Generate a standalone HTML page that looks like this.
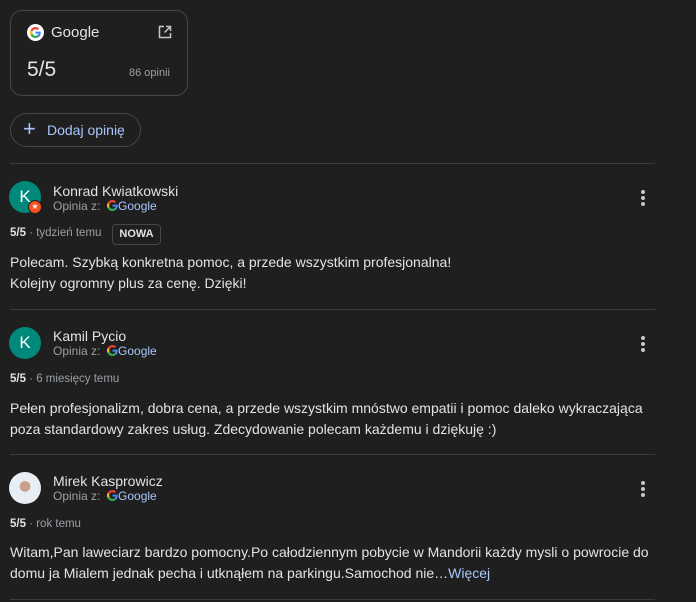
<!DOCTYPE html><html><head><style>
body{margin:0;background:#1f1f1f;font-family:"Liberation Sans",sans-serif;color:#e3e3e3;width:696px;height:602px;overflow:hidden;position:relative}
.a{position:absolute}
.card{left:10px;top:10px;width:178px;height:86px;border:1px solid #444746;border-radius:12px;box-sizing:border-box}
.btn{left:10px;top:113px;width:131px;height:34px;border:1px solid #444746;border-radius:17px;box-sizing:border-box;color:#a8c7fa;font-size:14px}
.hr{left:10px;width:645px;height:1px;background:#3c3c3c}
.av{left:9px;width:32px;height:32px;border-radius:50%;background:#00897b;color:#fff;font-size:17px;text-align:center;line-height:32px}
.nm{left:53px;font-size:14px;color:#e3e3e3}
.op{left:53px;font-size:12px;color:#9aa0a6}
.op b{font-weight:normal;color:#a8c7fa}
.rt{left:10px;font-size:11.5px;color:#9aa0a6}
.rt b{color:#e3e3e3}
.tx{left:10px;font-size:14px;line-height:21px;color:#e3e3e3;width:640px}
.dots{left:641px;width:4px}
.dots i{display:block;width:4px;height:4px;border-radius:2px;background:#c4c7c5;margin-bottom:2px}
</style></head><body>
<svg width="0" height="0" style="position:absolute"><defs><g id="g"><path d="M23.5 12.3c0-.8-.1-1.6-.2-2.3H12v4.4h6.5a5.5 5.5 0 0 1-2.4 3.6v3h3.9c2.2-2.1 3.5-5.1 3.5-8.7z" fill="#4285f4"/><path d="M12 24c3.2 0 6-1.1 8-2.9l-3.9-3a7.2 7.2 0 0 1-10.8-3.8h-4v3.1A12 12 0 0 0 12 24z" fill="#34a853"/><path d="M5.3 14.3a7.2 7.2 0 0 1 0-4.6V6.6h-4a12 12 0 0 0 0 10.8z" fill="#fbbc05"/><path d="M12 4.8c1.8 0 3.3.6 4.6 1.8l3.4-3.4A12 12 0 0 0 1.3 6.6l4 3.1A7.2 7.2 0 0 1 12 4.8z" fill="#ea4335"/></g></defs></svg>
<div class="a card">
<div class="a" style="left:16px;top:13px;width:17px;height:17px;border-radius:50%;background:#fff"><svg class="a" style="left:3px;top:3px" width="11" height="11" viewBox="0 0 24 24"><use href="#g"/></svg></div>
<div class="a" style="left:40px;top:13px;font-size:15px">Google</div>
<svg class="a" style="left:147px;top:14px" width="14" height="14" viewBox="0 0 14 14" fill="none" stroke="#c4c7c5" stroke-width="1.5"><path d="M6 1.5H1.5v11h11V8M8 1.5h4.5V6M12.5 1.5L6.5 7.5"/></svg>
<div class="a" style="left:16px;top:47px;font-size:21px">5/5</div>
<div class="a" style="left:118px;top:56px;font-size:11px;color:#9aa0a6">86 opinii</div>
</div>
<div class="a btn"><span class="a" style="left:12px;top:3px;font-size:22px;line-height:24px">+</span><span class="a" style="left:36px;top:8px">Dodaj opinię</span></div>
<div class="a hr" style="top:163px"></div>

<div class="a av" style="top:181px">K<div class="a" style="left:19px;top:19px;width:12px;height:12px;border-radius:50%;background:#f4511e;border:1px solid #1f1f1f;font-size:8px;line-height:12px">★</div></div>
<div class="a nm" style="top:183px">Konrad Kwiatkowski</div>
<div class="a op" style="top:199px">Opinia z: &nbsp;<svg width="11" height="11" viewBox="0 0 24 24" style="vertical-align:-1px"><use href="#g"/></svg><b>Google</b></div>
<div class="a rt" style="top:227px"><b>5/5</b> · tydzień temu</div>
<div class="a" style="left:112px;top:224px;width:49px;height:21px;border:1px solid #444746;border-radius:4px;box-sizing:border-box;font-size:11px;font-weight:bold;text-align:center;line-height:19px">NOWA</div>
<div class="a tx" style="top:252px">Polecam. Szybką konkretna pomoc, a przede wszystkim profesjonalna!<br>Kolejny ogromny plus za cenę. Dzięki!</div>
<div class="a dots" style="top:190px"><i></i><i></i><i></i></div>
<div class="a hr" style="top:309px"></div>

<div class="a av" style="top:327px">K</div>
<div class="a nm" style="top:328px">Kamil Pycio</div>
<div class="a op" style="top:344px">Opinia z: &nbsp;<svg width="11" height="11" viewBox="0 0 24 24" style="vertical-align:-1px"><use href="#g"/></svg><b>Google</b></div>
<div class="a rt" style="top:373px"><b>5/5</b> · 6 miesięcy temu</div>
<div class="a tx" style="top:398px">Pełen profesjonalizm, dobra cena, a przede wszystkim mnóstwo empatii i pomoc daleko wykraczająca poza standardowy zakres usług. Zdecydowanie polecam każdemu i dziękuję :)</div>
<div class="a dots" style="top:336px"><i></i><i></i><i></i></div>
<div class="a hr" style="top:454px"></div>

<div class="a av" style="top:472px;background:radial-gradient(circle at 50% 45%,#c9a08a 0 22%,#e8eef3 23% 100%)"></div>
<div class="a nm" style="top:473px">Mirek Kasprowicz</div>
<div class="a op" style="top:489px">Opinia z: &nbsp;<svg width="11" height="11" viewBox="0 0 24 24" style="vertical-align:-1px"><use href="#g"/></svg><b>Google</b></div>
<div class="a rt" style="top:518px"><b>5/5</b> · rok temu</div>
<div class="a tx" style="top:542px">Witam,Pan laweciarz bardzo pomocny.Po całodziennym pobycie w Mandorii każdy mysli o powrocie do domu ja Mialem jednak pecha i utknąłem na parkingu.Samochod nie…<span style="color:#a8c7fa">Więcej</span></div>
<div class="a dots" style="top:481px"><i></i><i></i><i></i></div>
<div class="a hr" style="top:599px"></div>
</body></html>
